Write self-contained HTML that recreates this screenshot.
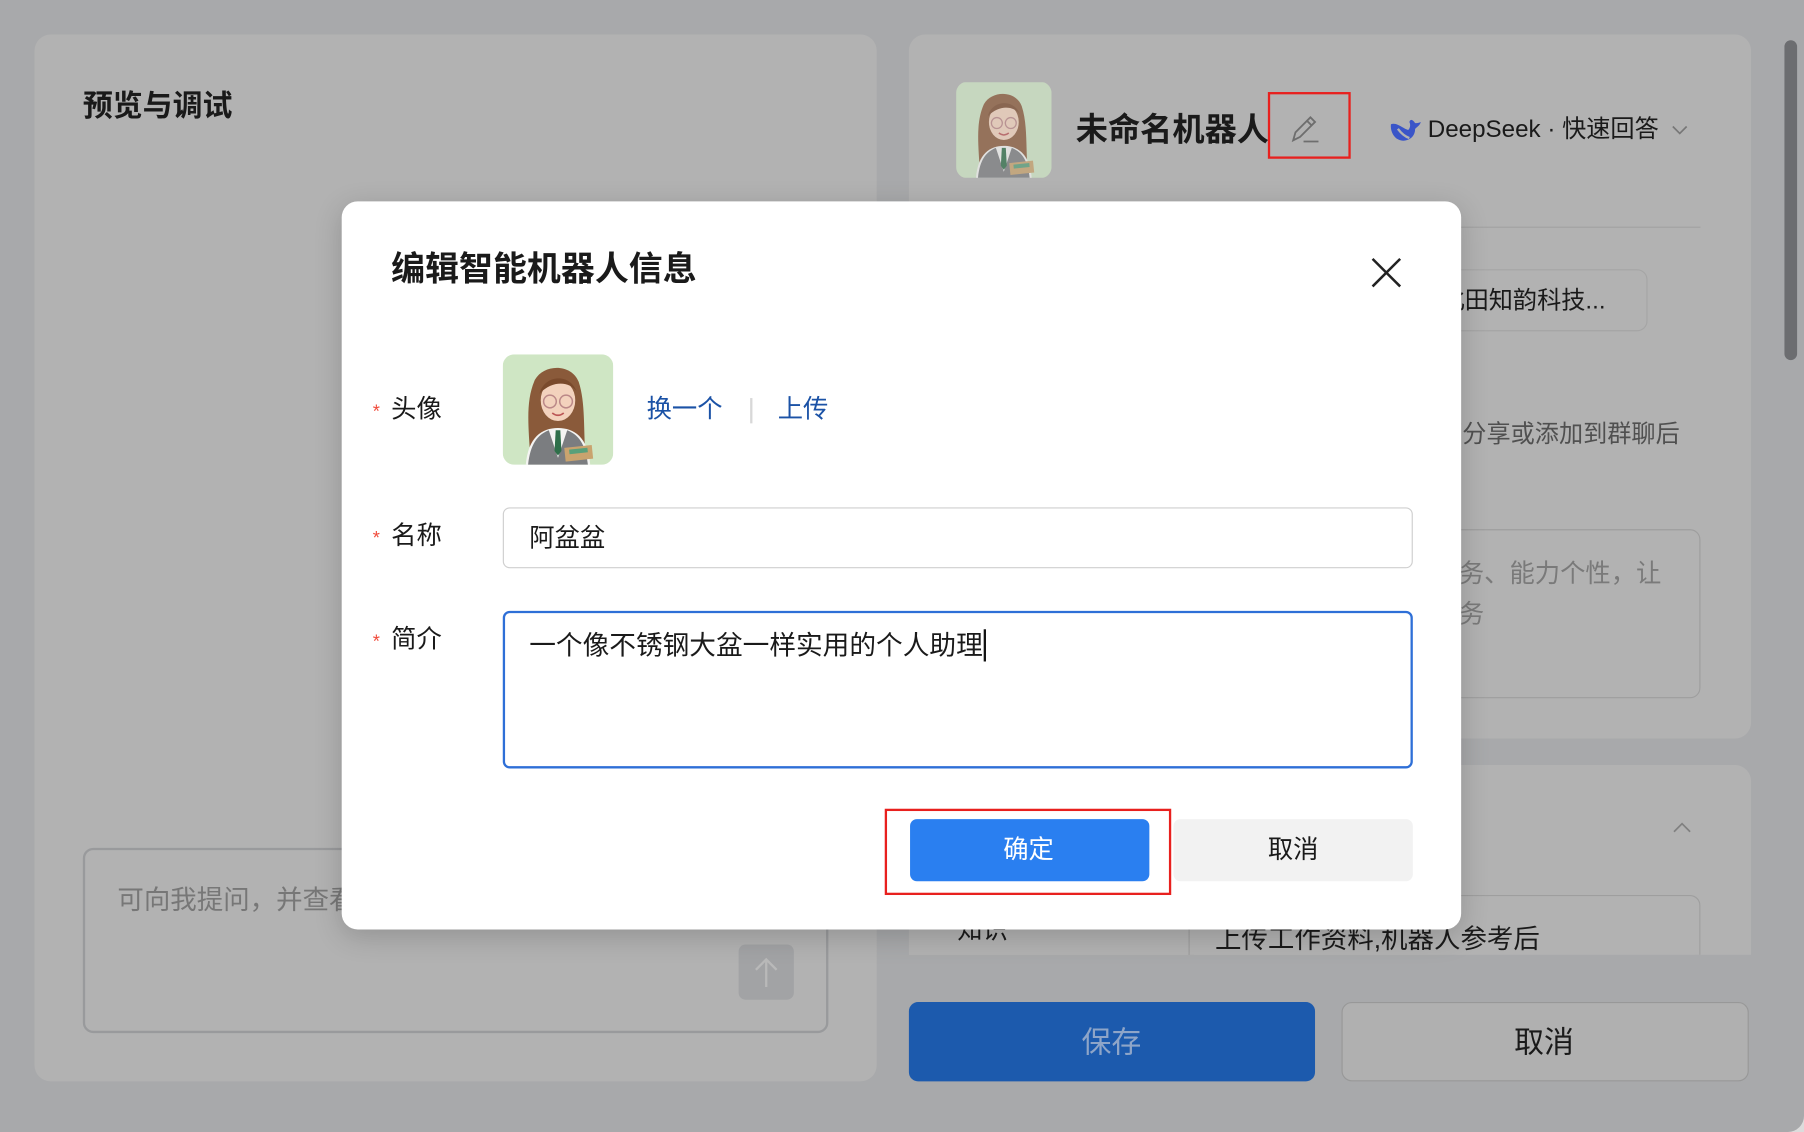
<!DOCTYPE html>
<html><head><meta charset="utf-8">
<style>
*{box-sizing:border-box;margin:0;padding:0}
html,body{width:1804px;height:1132px;overflow:hidden;background:#dcdcdc}
#w{position:absolute;left:0;top:0;width:1568px;height:984px;transform:scale(1.150510,1.150407);transform-origin:0 0;background:#a8a9ab;font-family:"Liberation Sans","Noto Sans CJK SC",sans-serif;color:#1a1a1a;border-radius:0 0 14px 0;overflow:hidden}
.a{position:absolute}
.panel{background:#b2b2b2;border-radius:14px}
.t{position:absolute;white-space:nowrap;line-height:1}
</style></head><body>
<svg width="0" height="0" style="position:absolute">
<defs>
<symbol id="av" viewBox="0 0 96 96">
<rect width="96" height="96" fill="#cfe6c4"/>
<path d="M24 90 C22 60 20 40 28 22 C36 8 60 8 66 24 C72 42 70 66 72 90 Z" fill="#8a5a3a"/>
<ellipse cx="48" cy="40" rx="15" ry="18" fill="#f3d2bd"/>
<path d="M32 34 C36 18 58 16 64 32 C58 24 44 22 32 34Z" fill="#7a4a2c"/>
<circle cx="41" cy="41" r="5.5" fill="none" stroke="#b88" stroke-width="1.3"/>
<circle cx="55" cy="41" r="5.5" fill="none" stroke="#b88" stroke-width="1.3"/>
<path d="M43 51 Q48 55 53 51" stroke="#b55" stroke-width="1.5" fill="none"/>
<path d="M20 96 C22 72 34 64 48 64 C62 64 74 72 76 96 Z" fill="#f4f4f2"/>
<path d="M22 96 C24 78 30 70 40 66 L48 90 L56 66 C66 70 72 78 74 96 Z" fill="#7b7d80"/>
<path d="M46 66 L50 66 L51 84 L48 88 L45 84Z" fill="#2f6f4a"/>
<rect x="54" y="80" width="24" height="12" fill="#c9a36e" transform="rotate(-6 66 86)"/>
<rect x="58" y="82" width="16" height="4" fill="#58a07a" transform="rotate(-6 66 86)"/>
</symbol>
</defs>
</svg>
<div id="w">
<div class="a" style="left:1551px;top:35px;width:11px;height:278px;background:#6c6d70;border-radius:6px"></div>
<div class="a panel" style="left:30px;top:30px;width:732px;height:910px"></div>
<div class="t" style="left:72px;top:79px;font-size:26px;font-weight:bold">预览与调试</div>
<div class="a" style="left:72px;top:737px;width:648px;height:161px;border:2px solid #999a9c;border-radius:9px"></div>
<div class="t" style="left:102px;top:771px;font-size:23px;color:#777">可向我提问，并查看回复</div>
<div class="a" style="left:642px;top:821px;width:48px;height:48px;background:#a2a3a5;border-radius:6px"></div>
<svg class="a" style="left:654px;top:830px" width="24" height="30"><path d="M12 28 V4 M3 13 L12 4 L21 13" stroke="#b9b9b9" stroke-width="2" fill="none"/></svg>
<div class="a panel" style="left:790px;top:30px;width:732px;height:612px"></div>
<svg class="a" style="left:831px;top:71px;border-radius:10px;opacity:.72" width="83" height="84"><use href="#av"/></svg>
<div class="t" style="left:935px;top:99px;font-size:28px;font-weight:bold">未命名机器人</div>
<div class="a" style="left:1102px;top:80px;width:72px;height:58px;border:2.5px solid #e8201e"></div>
<svg class="a" style="left:1120px;top:98px" width="30" height="28"><path d="M4 24 L6 17 L19 4 L23 8 L10 21 Z M16 7 L20 11" stroke="#6e6e6e" stroke-width="1.6" fill="none"/><path d="M13 25 H26" stroke="#6e6e6e" stroke-width="1.6"/></svg>
<svg class="a" style="left:1206px;top:100px" width="30" height="26" viewBox="0 0 30 26"><path d="M3 8 C2 16 8 24 16 22 C21 21 24 17 24 12 C26 10 28 9 29 6 C27 7 25 7 24 7 C22 4 20 3 19 6 C20 8 20 11 18 13 C14 12 8 6 3 8Z" fill="#3a55c8"/><path d="M9 12 C12 16 16 19 19 20" stroke="#b2b2b2" stroke-width="2" fill="none"/></svg>
<div class="t" style="left:1241px;top:102px;font-size:21px">DeepSeek · 快速回答</div>
<svg class="a" style="left:1452px;top:107px" width="16" height="12"><path d="M2 3 L8 9 L14 3" stroke="#777" stroke-width="1.5" fill="none"/></svg>
<div class="a" style="left:830px;top:197px;width:648px;height:1px;background:#a2a2a2"></div>
<div class="a" style="left:1180px;top:234px;width:252px;height:54px;border:1.5px solid #a5a5a5;border-radius:9px"></div>
<div class="t" style="left:1252px;top:251px;font-size:21px">北田知韵科技...</div>
<div class="t" style="left:1250px;top:367px;font-size:21px;color:#505050">可分享或添加到群聊后</div>
<div class="a" style="left:1180px;top:460px;width:298px;height:147px;border:1.5px solid #9e9e9e;border-radius:9px"></div>
<div class="t" style="left:1246px;top:488px;font-size:22px;color:#7a7a7a">任务、能力个性，让</div>
<div class="t" style="left:1246px;top:523px;font-size:22px;color:#7a7a7a">任务</div>
<div class="a" style="left:790px;top:665px;width:732px;height:165px;background:#b2b2b2;border-radius:14px 14px 0 0"></div>
<svg class="a" style="left:1452px;top:713px" width="20" height="14"><path d="M3 10 L10 3 L17 10" stroke="#808080" stroke-width="1.5" fill="none"/></svg>
<div class="a" style="left:1033px;top:778px;width:445px;height:52px;border:1.5px solid #9e9e9e;border-bottom:none;border-radius:9px 9px 0 0"></div>
<div class="a" style="left:1033px;top:800px;width:1px;height:30px;background:#9e9e9e"></div>
<div class="a" style="left:790px;top:790px;width:240px;height:40px;overflow:hidden"><div class="t" style="left:42px;top:8px;font-size:22px">知识</div></div>
<div class="a" style="left:1050px;top:790px;width:420px;height:40px;overflow:hidden"><div class="t" style="left:6px;top:15px;font-size:23px">上传工作资料,机器人参考后</div></div>
<div class="a" style="left:790px;top:871px;width:353px;height:69px;background:#1c5aad;border-radius:8px"></div>
<div class="t" style="left:940px;top:893px;font-size:26px;color:#8ea5c8">保存</div>
<div class="a" style="left:1166px;top:871px;width:354px;height:69px;border:1.5px solid #989898;border-radius:9px;background:#b0b0b0"></div>
<div class="t" style="left:1316px;top:893px;font-size:26px">取消</div>
<div class="a" style="left:297px;top:175px;width:973px;height:633px;background:#fff;border-radius:14px;box-shadow:0 6px 24px rgba(0,0,0,.18)"></div>
<div class="t" style="left:340px;top:220px;font-size:29.5px;font-weight:bold">编辑智能机器人信息</div>
<svg class="a" style="left:1190px;top:222px" width="30" height="30"><path d="M3 3 L27 27 M27 3 L3 27" stroke="#222" stroke-width="2.2"/></svg>
<div class="t" style="left:324px;top:351px;font-size:16px;color:#f04a3a">*</div>
<div class="t" style="left:340px;top:345px;font-size:22px">头像</div>
<svg class="a" style="left:437px;top:308px;border-radius:10px" width="96" height="96"><use href="#av"/></svg>
<div class="t" style="left:562px;top:345px;font-size:22px;color:#1b52a6">换一个</div>
<div class="a" style="left:652px;top:346px;width:2px;height:22px;background:#d8d8d8"></div>
<div class="t" style="left:676px;top:345px;font-size:22px;color:#1b52a6">上传</div>
<div class="t" style="left:324px;top:461px;font-size:16px;color:#f04a3a">*</div>
<div class="t" style="left:340px;top:455px;font-size:22px">名称</div>
<div class="a" style="left:437px;top:441px;width:791px;height:53px;border:1.5px solid #cfcfcf;border-radius:6px"></div>
<div class="t" style="left:460px;top:457px;font-size:22px">阿盆盆</div>
<div class="t" style="left:324px;top:551px;font-size:16px;color:#f04a3a">*</div>
<div class="t" style="left:340px;top:545px;font-size:22px">简介</div>
<div class="a" style="left:437px;top:531px;width:791px;height:137px;border:2px solid #2e6fd7;border-radius:6px"></div>
<div class="t" style="left:460px;top:550px;font-size:23.2px">一个像不锈钢大盆一样实用的个人助理</div>
<div class="a" style="left:855px;top:547px;width:2px;height:28px;background:#111"></div>
<div class="a" style="left:791px;top:712px;width:208px;height:54px;background:#2a7ff0;border-radius:6px"></div>
<div class="t" style="left:872px;top:728px;font-size:22px;color:#fff">确定</div>
<div class="a" style="left:769px;top:703px;width:249px;height:75px;border:2.5px solid #e8201e"></div>
<div class="a" style="left:1020px;top:712px;width:208px;height:54px;background:#f2f2f2;border-radius:6px"></div>
<div class="t" style="left:1102px;top:728px;font-size:22px">取消</div>
</div>
</body></html>
